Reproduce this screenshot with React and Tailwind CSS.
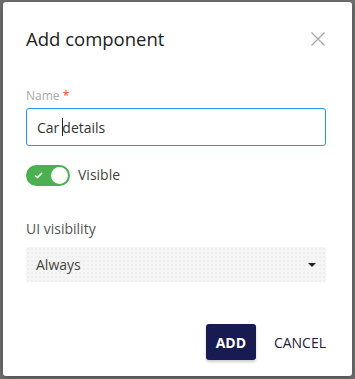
export default function App() {
  return (
    <div className="h-[379px] w-[355px] bg-[#6f6f6f] pl-[3px] pt-[2px] font-['Open_Sans',sans-serif]">
      <div className="flex h-[374px] w-[349px] flex-col rounded-[3px] bg-white shadow-[0_2px_6px_rgba(0,0,0,0.3)]">
        <div className="flex items-center justify-between pl-[23px] pr-[26px] pt-[25px]">
          <h2 className="text-[18.5px] leading-[24px] text-[#222]">Add component</h2>
          <svg width="16" height="16" viewBox="0 0 16 16" className="text-[#a8a8a8]">
            <path d="M1.5 1.5 L14.5 14.5 M14.5 1.5 L1.5 14.5" stroke="currentColor" strokeWidth="1.3" fill="none" />
          </svg>
        </div>
        <div className="mt-[37px] pl-[23px] pr-[26px]">
          <label className="block text-[12px] leading-[16px] text-[#aaa]">
            Name <span className="text-[#f44336]">*</span>
          </label>
          <div className="mt-[4px] flex h-[38px] items-center rounded-[3px] border border-[#2196f3] px-[10px] text-[14px] text-[#333]">
            Car<span className="ml-[3px] mr-[-1px] inline-block h-[18px] w-px bg-[#222]"></span>details
          </div>
          <div className="mt-[19px] flex items-center gap-[8px]">
            <div className="flex h-[21px] w-[44px] items-center justify-between rounded-full bg-[#4caf50] pl-[8px] pr-[2px]">
              <svg width="9" height="7" viewBox="0 0 9 7">
                <path d="M1 3.5 L3.5 5.5 L8 1" stroke="white" strokeWidth="1.6" fill="none" />
              </svg>
              <div className="h-[17px] w-[17px] rounded-full bg-white"></div>
            </div>
            <span className="-mt-[3px] text-[14px] text-[#444]">Visible</span>
          </div>
          <div className="mt-[33px] text-[14px] leading-[20px] text-[#555]">UI visibility</div>
          <div className="mt-[8px] flex h-[35px] items-center justify-between rounded-[2px] bg-[#f5f5f5] bg-[radial-gradient(#e6e6e6_0.6px,transparent_0.8px)] bg-[length:4px_4px] pl-[10px] pr-[10px] text-[14px] text-[#444]">
            <span>Always</span>
            <svg width="8" height="4" viewBox="0 0 8 4">
              <path d="M0 0 L8 0 L4 4 Z" fill="#222" />
            </svg>
          </div>
        </div>
        <div className="mt-auto flex items-center justify-end gap-[18px] pb-[16px] pr-[26px]">
          <button className="h-[36px] w-[50px] rounded-[3px] bg-[#181a52] text-[14px] font-bold text-white shadow-[0_2px_3px_rgba(0,0,0,0.2)]">
            ADD
          </button>
          <button className="text-[14px] text-[#1f2042]">CANCEL</button>
        </div>
      </div>
    </div>
  );
}
